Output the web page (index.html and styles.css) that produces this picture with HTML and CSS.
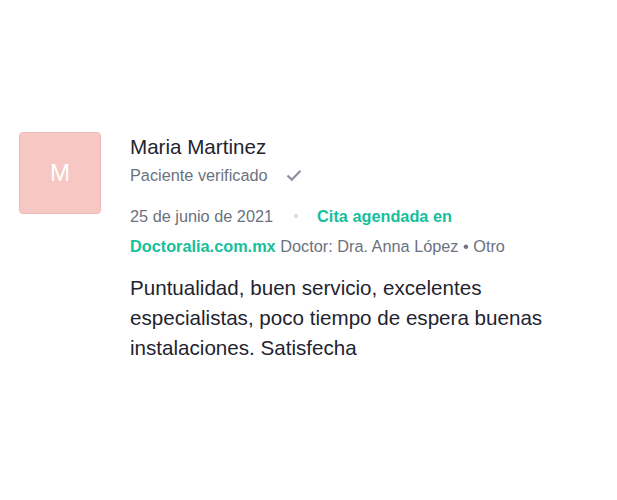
FILE: index.html
```html
<!DOCTYPE html>
<html lang="es">
<head>
<meta charset="UTF-8">
<meta name="viewport" content="width=device-width, initial-scale=1.0">
<title>Opinión</title>
<link rel="stylesheet" href="styles.css">
</head>
<body>

<div class="review">
  <div class="avatar">M</div>
  <div class="review-body">
    <div class="author">Maria Martinez</div>
    <div class="verified">
      Paciente verificado
      <svg class="check" width="16" height="13" viewBox="0 0 16 13">
        <path d="M1.5 6.5 L5.8 10.8 L14.5 1.8" fill="none" stroke="#8a909c" stroke-width="2.2"/>
      </svg>
    </div>
    <div class="meta">
      <span class="date">25 de junio de 2021</span>
      <span class="sep"></span>
      <span class="source">Cita agendada en Doctoralia.com.mx</span>
      Doctor: Dra. Anna López &bull; Otro
    </div>
    <p class="text">Puntualidad, buen servicio, excelentes especialistas, poco tiempo de espera buenas instalaciones. Satisfecha</p>
  </div>
</div>

</body>
</html>
```

FILE: styles.css
```css
* {
  margin: 0;
  padding: 0;
  box-sizing: border-box;
}

body {
  font-family: "Liberation Sans", Arial, Helvetica, sans-serif;
  background: #fff;
  color: #1f2430;
  padding: 132px 19px 0;
}

.review {
  display: flex;
  gap: 29px;
  width: 545px;
}

.avatar {
  flex: none;
  width: 82px;
  height: 82px;
  background: #f7c7c3;
  border: 1px solid #ecbcb8;
  border-radius: 4px;
  color: #fff;
  font-size: 24px;
  display: flex;
  align-items: center;
  justify-content: center;
}

.review-body {
  flex: 1;
  padding-top: 3px;
}

.author {
  font-size: 20.6px;
  line-height: 24px;
}

.verified {
  font-size: 16.3px;
  line-height: 20px;
  color: #6b7280;
  margin-top: 6px;
  display: flex;
  align-items: center;
  gap: 18px;
}

.meta {
  font-size: 16.3px;
  line-height: 30px;
  color: #6b7280;
  margin-top: 16px;
}

.sep {
  display: inline-block;
  width: 4px;
  height: 4px;
  border-radius: 50%;
  background: #d8dbe0;
  margin: 0 15px 0 16px;
  vertical-align: middle;
  position: relative;
  top: -2px;
}

.source {
  color: #16bf9b;
  font-weight: bold;
}

.text {
  font-size: 20.6px;
  line-height: 30px;
  color: #1f2430;
  margin-top: 12px;
}
```
